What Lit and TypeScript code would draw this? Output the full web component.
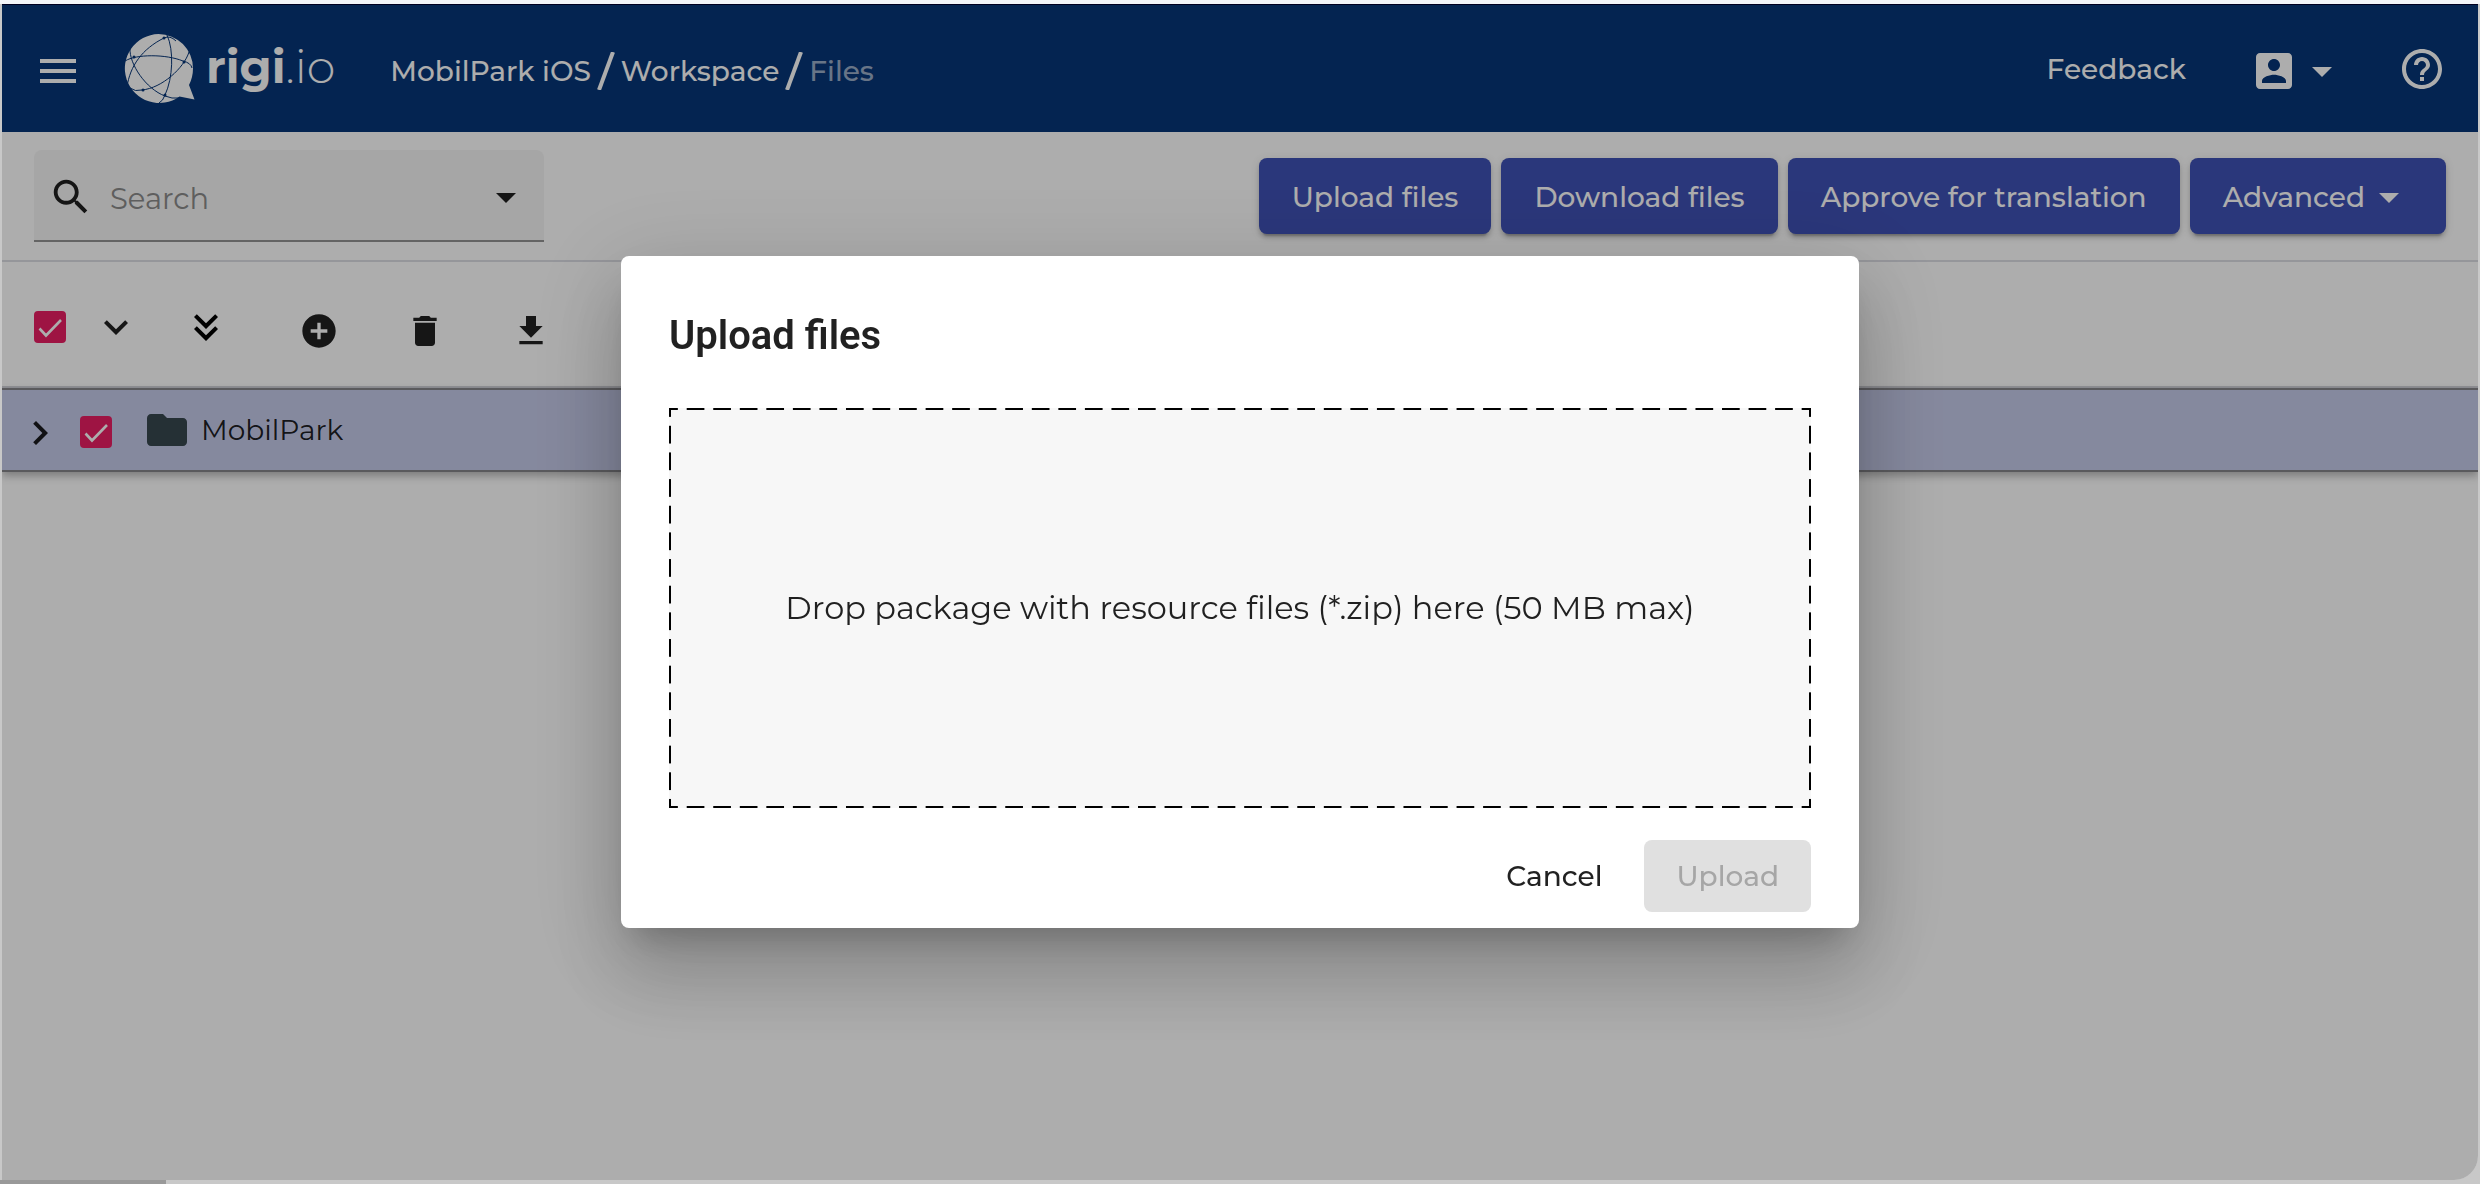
import { LitElement, html, css, svg } from "lit";
import { customElement, property, state } from "lit/decorators.js";

const icons: Record<string, unknown> = {
  menu: svg`<path d="M3 18h18v-2H3v2zm0-5h18v-2H3v2zm0-7v2h18V6H3z"/>`,
  account: svg`<path d="M3 5v14c0 1.100.900 2 2 2h14c1.100 0 2-.9 2-2V5c0-1.100-.9-2-2-2H5c-1.110 0-2 .9-2 2zm12 4c0 1.660-1.340 3-3 3s-3-1.340-3-3 1.340-3 3-3 3 1.340 3 3zm-9 8c0-2 4-3.100 6-3.100s6 1.100 6 3.100v1H6v-1z"/>`,
  help: svg`<path d="M11 18h2v-2h-2v2zm1-16C6.480 2 2 6.480 2 12s4.480 10 10 10 10-4.480 10-10S17.520 2 12 2zm0 18c-4.410 0-8-3.590-8-8s3.590-8 8-8 8 3.590 8 8-3.590 8-8 8zm0-14c-2.210 0-4 1.790-4 4h2c0-1.100.9-2 2-2s2 .9 2 2c0 2-3 1.750-3 5h2c0-2.250 3-2.500 3-5 0-2.210-1.790-4-4-4z"/>`,
  search: svg`<path d="M15.500 14h-.79l-.28-.27C15.410 12.590 16 11.110 16 9.500 16 5.910 13.090 3 9.500 3S3 5.910 3 9.500 5.910 16 9.500 16c1.610 0 3.090-.59 4.230-1.570l.27.28v.79l5 4.990L20.490 19l-4.990-5zm-6 0C7.010 14 5 11.990 5 9.500S7.010 5 9.500 5 14 7.010 14 9.500 11.990 14 9.500 14z"/>`,
  caret: svg`<path d="M7 10l5 5 5-5z"/>`,
  down: svg`<path d="M7.410 8.590L12 13.170l4.590-4.580L18 10l-6 6-6-6z"/>`,
  right: svg`<path d="M8.590 16.590L13.170 12 8.590 7.410 10 6l6 6-6 6z"/>`,
  doubleDown: svg`<path fill="#000" d="M16.590 5.590L18 7l-6 6-6-6 1.410-1.410L12 10.170l4.590-4.580zm0 6L18 13l-6 6-6-6 1.410-1.410L12 16.170l4.590-4.580z"/>`,
  add: svg`<path d="M12 2C6.480 2 2 6.480 2 12s4.480 10 10 10 10-4.480 10-10S17.520 2 12 2zm5 11h-4v4h-2v-4H7v-2h4V7h2v4h4v2z"/>`,
  trash: svg`<path d="M6 19c0 1.100.9 2 2 2h8c1.100 0 2-.9 2-2V7H6v12zM19 4h-3.500l-1-1h-5l-1 1H5v2h14V4z"/>`,
  download: svg`<path d="M19 9h-4V3H9v6H5l7 7 7-7zM5 18v2h14v-2H5z"/>`,
  folder: svg`<path d="M10 4H4c-1.100 0-1.990.9-1.990 2L2 18c0 1.100.9 2 2 2h16c1.100 0 2-.9 2-2V8c0-1.100-.9-2-2-2h-8l-2-2z"/>`,
};

@customElement("ui-icon")
class UiIcon extends LitElement {
  @property() name = "menu";
  @property({ type: Number }) size = 48;

  static styles = css`
    :host { display: inline-flex; flex: none; }
    svg { display: block; fill: currentColor; }
  `;

  render() {
    return html`<svg width=${this.size} height=${this.size} viewBox="0 0 24 24" aria-hidden="true">${icons[this.name]}</svg>`;
  }
}

@customElement("ui-checkbox")
class UiCheckbox extends LitElement {
  @property() label = "";
  @property({ type: Boolean }) checked = false;

  static styles = css`
    :host { display: inline-grid; flex: none; }
    .box { display: grid; width: 32px; height: 32px; }
    input, svg { grid-area: 1 / 1; width: 32px; height: 32px; margin: 0; }
    input { appearance: none; box-sizing: border-box; border: 4px solid #757575; border-radius: 4px; }
    input:checked { background: #e91e63; border-color: #e91e63; }
    svg { pointer-events: none; fill: none; stroke: #fff; stroke-width: 2.600; visibility: hidden; }
    input:checked + svg { visibility: visible; }
  `;

  render() {
    return html`<label class="box">
      <input type="checkbox" aria-label=${this.label} .checked=${this.checked} />
      <svg viewBox="0 0 32 32"><path d="M5.500 17.500L12 24.500L27 9"/></svg>
    </label>`;
  }
}

@customElement("rigi-logo")
class RigiLogo extends LitElement {
  static styles = css`
    :host { display: block; }
    .logo { display: flex; align-items: center; gap: 10px; color: #fff; text-decoration: none; }
    .mark { display: block; flex: none; }
    .word { margin-bottom: 4px; font: 700 46px/56px Montserrat, Lato, sans-serif; }
    .light { font-weight: 300; }
  `;

  render() {
    return html`<a class="logo" href="#home" aria-label="rigi.io">
      <svg class="mark" width="72" height="70" viewBox="0 0 72 70">
        <path fill="#fff" d="M34.500 0a34.500 34.500 0 0 1 34.500 34.500c0 6-1.500 11.500-4 16.500L70.500 65.500 55.500 62.500A34.500 34.500 0 1 1 34.500 0z"/>
        <g fill="none" stroke="#073678" stroke-width="1">
          <path d="M3 53C6 32 18 15 40 4Q46 1 52 7"/>
          <path d="M43 1C50 16 49 44 41 61Q39 67 35 69"/>
          <path d="M1 27C12 20 42 20 59 27Q67 29 68 34"/>
          <path d="M65 18C60 34 38 54 18 56Q11 58 6 54"/>
          <path d="M6 14C5 30 22 55 41 62Q48 65 55 64"/>
        </g>
        <g fill="#073678"><circle cx="40" cy="4" r="1.500"/><circle cx="10" cy="23" r="1.500"/><circle cx="60" cy="28" r="1.500"/><circle cx="19" cy="56" r="1.500"/><circle cx="41" cy="61" r="1.500"/></g>
      </svg>
      <span class="word">rigi<span class="light">.io</span></span>
    </a>`;
  }
}

@customElement("upload-dialog")
class UploadDialog extends LitElement {
  static styles = css`
    :host { display: block; width: 50%; color: rgba(0, 0, 0, 0.870); font-family: Montserrat, Inter, sans-serif; }
    .dialog {
      display: flex; flex-direction: column; padding: 48px 48px 16px;
      background: #fff; border-radius: 8px;
      box-shadow: 0 22px 30px -14px rgba(0, 0, 0, 0.200), 0 48px 76px 6px rgba(0, 0, 0, 0.140), 0 18px 92px 16px rgba(0, 0, 0, 0.120);
    }
    h2 { margin: 0 0 40px; font: 600 40px/64px Roboto, sans-serif; }
    .drop {
      --dash-x: linear-gradient(90deg, #000 34%, transparent 34% 66%, #000 66%);
      --dash-y: linear-gradient(#000 34%, transparent 34% 66%, #000 66%);
      display: grid; place-items: center; height: 400px; font-size: 32px; line-height: 40px;
      background:
        var(--dash-x) top left / calc(100% / 43) 2px repeat-x,
        var(--dash-x) bottom left / calc(100% / 43) 2px repeat-x,
        var(--dash-y) top left / 2px calc(100% / 15) repeat-y,
        var(--dash-y) top right / 2px calc(100% / 15) repeat-y,
        #f7f7f7;
    }
    .drop > * { grid-area: 1 / 1; }
    .file { width: 100%; height: 100%; opacity: 0; }
    .actions { display: flex; justify-content: flex-end; gap: 10px; padding-top: 32px; }
    button { height: 72px; padding: 0 32px; border: 0; border-radius: 8px; background: none; color: inherit; font: 500 28px/72px Montserrat, Inter, sans-serif; }
    button:disabled { background: #e0e0e0; color: #a6a6a6; }
  `;

  render() {
    return html`<section class="dialog" role="dialog" aria-modal="true" aria-labelledby="title">
      <h2 id="title">Upload files</h2>
      <label class="drop">
        <span>Drop package with resource files (*.zip) here (50 MB max)</span>
        <input class="file" type="file" accept=".zip" />
      </label>
      <div class="actions">
        <button type="button">Cancel</button>
        <button type="button" disabled>Upload</button>
      </div>
    </section>`;
  }
}

@customElement("app-root")
class AppRoot extends LitElement {
  @state() private folders = ["MobilPark"];

  static styles = css`
    :host { display: block; background: #c8c8c8; color: rgba(0, 0, 0, 0.870); font: 400 28px/40px Montserrat, Inter, sans-serif; }
    .frame { box-sizing: border-box; min-height: 100vh; padding: 4px 2px; display: flex; background: linear-gradient(#f3f5f9 4px, transparent 4px); }
    .window { flex: 1; display: flex; flex-direction: column; background: #fff; border-radius: 0 0 24px 0; overflow: hidden; }
    button { border: 0; margin: 0; padding: 0; background: none; color: inherit; font: inherit; display: inline-flex; align-items: center; justify-content: center; }

    .header { display: flex; align-items: center; height: 128px; padding: 0 32px; background: #073678; color: #fff; font-weight: 500; border-top: 1px solid #000030; box-sizing: border-box; }
    .menu { padding-top: 4px; }
    .logo { margin-left: 42px; }
    .crumbs { display: flex; align-items: center; gap: 6px; margin-left: 55px; padding-top: 4px; }
    .crumbs a { color: inherit; text-decoration: none; }
    .crumbs .current { color: rgba(255, 255, 255, 0.600); }
    .slash { display: block; stroke: #fff; stroke-width: 4; }
    .tools { display: flex; align-items: center; margin-left: auto; }
    .feedback { color: inherit; text-decoration: none; }
    .account { margin: 4px 0 0 64px; }
    .help { margin-left: 52px; }

    .bar { display: flex; align-items: center; justify-content: space-between; height: 128px; padding: 0 32px; border-bottom: 2px solid #dcdde4; }
    .search { display: flex; align-items: center; box-sizing: border-box; width: 510px; height: 92px; padding: 4px 14px 0 14px; background: #f5f5f5; border-bottom: 2px solid #949494; border-radius: 8px 8px 0 0; }
    .search input { flex: 1; min-width: 0; margin: 4px 0 0 16px; padding: 0; border: 0; outline: 0; background: none; color: inherit; font: inherit; font-size: 29px; }
    .search input::placeholder { color: #8b8b8b; opacity: 1; }
    .actions { display: flex; gap: 10px; }
    .actions button { height: 76px; padding: 2px 33px 0; background: #3f51b5; color: #fff; border-radius: 8px; font-weight: 500; box-shadow: 0 6px 2px -4px rgba(0, 0, 0, 0.200), 0 4px 4px rgba(0, 0, 0, 0.140), 0 2px 10px rgba(0, 0, 0, 0.120); }

    .toolbar { display: flex; align-items: center; box-sizing: border-box; height: 126px; padding: 6px 32px 0; border-bottom: 2px solid #d2d3da; }
    .toolbar .first { margin-left: 26px; }
    .toolbar .all { margin-left: 42px; }
    .edit { display: flex; gap: 66px; margin-left: 69px; padding-top: 8px; }
    .tree { list-style: none; margin: 0; padding: 0; }
    .row { display: flex; align-items: center; height: 80px; padding: 0 14px; background: #c5cae9; border: solid #85858a; border-width: 2px 0; box-shadow: 0 4px 8px rgba(0, 0, 0, 0.280); }
    .row ui-checkbox { margin: 4px 0 0 16px; }
    .expand { margin-top: 6px; }
    .folder { margin: 0 10px 0 31px; color: #37474f; }

    .backdrop { position: fixed; inset: 4px 2px; display: grid; place-items: center; background: rgba(0, 0, 0, 0.320); border-radius: 0 0 24px 0; overflow: hidden; }
    .status { position: fixed; left: 0; bottom: 0; width: 166px; height: 4px; background: #999; }
  `;

  render() {
    const slash = html`<svg class="slash" width="18" height="38" viewBox="0 0 18 38" aria-hidden="true"><path d="M2 38L16 0"/></svg>`;
    return html`<div class="frame">
      <div class="window">
        <header class="header">
          <button class="menu" aria-label="Menu"><ui-icon name="menu"></ui-icon></button>
          <rigi-logo class="logo"></rigi-logo>
          <nav class="crumbs" aria-label="Breadcrumb">
            <a href="#project">MobilPark iOS</a>${slash}<a href="#workspace">Workspace</a>${slash}<span class="current">Files</span>
          </nav>
          <div class="tools">
            <a class="feedback" href="#feedback">Feedback</a>
            <button class="account" aria-label="Account"><ui-icon name="account"></ui-icon><ui-icon name="caret"></ui-icon></button>
            <button class="help" aria-label="Help"><ui-icon name="help"></ui-icon></button>
          </div>
        </header>
        <section class="bar">
          <div class="search">
            <ui-icon name="search" size="46"></ui-icon>
            <input type="text" placeholder="Search" aria-label="Search" />
            <button aria-label="Search options"><ui-icon name="caret"></ui-icon></button>
          </div>
          <div class="actions">
            <button>Upload files</button>
            <button>Download files</button>
            <button>Approve for translation</button>
            <button>Advanced<ui-icon name="caret"></ui-icon></button>
          </div>
        </section>
        <main>
          <div class="toolbar">
            <ui-checkbox label="Select all" checked></ui-checkbox>
            <button class="first" aria-label="Expand one level"><ui-icon name="down"></ui-icon></button>
            <button class="all" aria-label="Expand all"><ui-icon name="doubleDown"></ui-icon></button>
            <div class="edit">
              <button aria-label="Add"><ui-icon name="add" size="40"></ui-icon></button>
              <button aria-label="Delete"><ui-icon name="trash" size="40"></ui-icon></button>
              <button aria-label="Download"><ui-icon name="download" size="40"></ui-icon></button>
            </div>
          </div>
          <ul class="tree">
            ${this.folders.map((name) => html`<li class="row">
              <button class="expand" aria-label="Expand ${name}"><ui-icon name="right"></ui-icon></button>
              <ui-checkbox label=${name} checked></ui-checkbox>
              <ui-icon class="folder" name="folder"></ui-icon>
              <span>${name}</span>
            </li>`)}
          </ul>
        </main>
      </div>
      <div class="backdrop"><upload-dialog></upload-dialog></div>
      <div class="status"></div>
    </div>`;
  }
}
